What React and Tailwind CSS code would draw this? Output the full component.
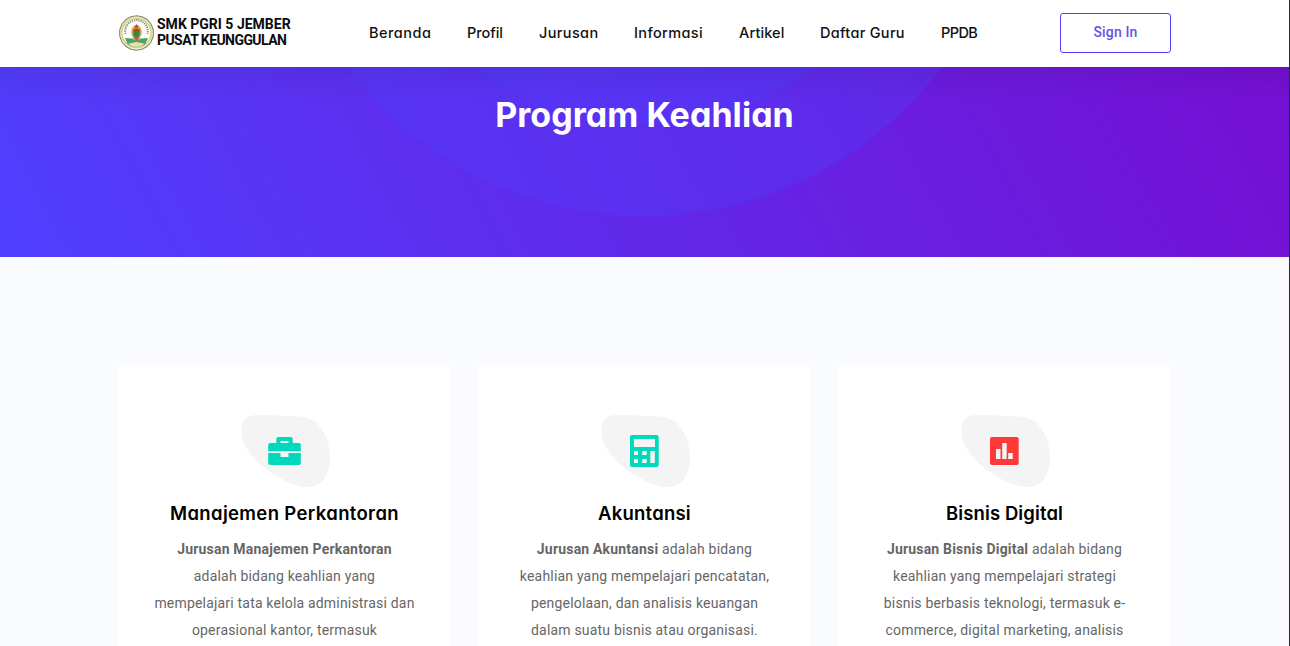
const NAV = [
  { label: 'Beranda', box: 'w-[98px] tracking-[0.5px]' },
  { label: 'Profil', box: 'w-[72px] tracking-[-0.05px]' },
  { label: 'Jurusan', box: 'w-[95px] tracking-[0.38px]' },
  { label: 'Informasi', box: 'w-[105px] tracking-[0.38px]' },
  { label: 'Artikel', box: 'w-[81px] tracking-[0.12px]' },
  { label: 'Daftar Guru', box: 'w-[121px] tracking-[0.3px]' },
  { label: 'PPDB', box: 'w-[60px] tracking-[-0.6px]' },
];

function Emblem() {
  return (
    <svg viewBox="0 0 35 36" className="h-9 w-[35px] shrink-0">
      <path d="M17.500 .8 L23 1.800 L28 4.500 L32 9 L34.300 15 L34.300 21 L32 27 L28 31.500 L23 34.300 L17.500 35.200 L12 34.300 L7 31.500 L3 27 L.7 21 L.7 15 L3 9 L7 4.500 L12 1.800 Z" fill="#f0eecb" stroke="#85866b" strokeWidth="1.100" />
      <circle cx="17.500" cy="18" r="14.600" fill="#fcfcf8" stroke="#d3cf7c" strokeWidth="1.300" />
      <path d="M6.500 19a11.300 11.300 0 1 1 22 0" fill="none" stroke="#8d8d8d" strokeWidth="2" strokeDasharray="1.300 .9" />
      <path d="M6 23l7 .5 4.500 2 4.500-2 7-.5-2.500 6-4.500 2.500h-9L8.500 29z" fill="#4aa36d" />
      <path d="M9.500 28.500l8-1.500 8 1.500-3.500 3h-9z" fill="#e9dfa2" />
      <ellipse cx="17.500" cy="17" rx="5.300" ry="7" fill="#c9b04a" />
      <ellipse cx="17.500" cy="18" rx="3.400" ry="4.800" fill="#3b8444" />
      <path d="M17.500 9l2 3.500h-4zM14.500 14h6v2.500h-6z" fill="#cc3a2e" />
      <path d="M13.500 22.500h8L17.500 26z" fill="#cf5a36" />
    </svg>
  );
}

function Briefcase() {
  return (
    <svg viewBox="268 437 33 28" className="h-7 w-[33px]" fill="#00d9bb">
      <path fillRule="evenodd" d="M276.300 443v-4a2 2 0 0 1 2-2h12.400a2 2 0 0 1 2 2v4h6.100a2 2 0 0 1 2 2v6.200h-32.600v-6.200a2 2 0 0 1 2-2zM280.500 441v2h8v-2z" />
      <path d="M268.200 453h12.300v4h8v-4h12.300v10a2 2 0 0 1-2 2h-28.600a2 2 0 0 1-2-2z" />
    </svg>
  );
}

function Calculator() {
  return (
    <svg viewBox="630 435 29 32" className="h-8 w-[29px]" fill="#00d9bb">
      <path fillRule="evenodd" d="M632 435h24.700a2 2 0 0 1 2 2v28a2 2 0 0 1-2 2H632a2 2 0 0 1-2-2v-28a2 2 0 0 1 2-2zM634 439v8h21v-8zM634 451v4h4v-4zM642.200 451v4h4.500v-4zM634 459v4h4v-4zM642.200 459v4h4.500v-4zM650.300 451v12h4.500v-12z" />
    </svg>
  );
}

function BarChart() {
  return (
    <svg viewBox="990 437 29 28" className="h-7 w-[29px]" fill="#ff3838">
      <path fillRule="evenodd" d="M992 437h24.700a2 2 0 0 1 2 2v24a2 2 0 0 1-2 2H992a2 2 0 0 1-2-2v-24a2 2 0 0 1 2-2zM996 449v10h4.500v-10zM1002.200 443v16h4.500v-16zM1008.200 453v6h4.500v-6z" />
    </svg>
  );
}

const CARDS = [
  {
    title: 'Manajemen Perkantoran',
    tracking: 'tracking-[0.35px]',
    Icon: Briefcase,
    lead: 'Jurusan Manajemen Perkantoran',
    rest: '',
    lines: ['adalah bidang keahlian yang', 'mempelajari tata kelola administrasi dan', 'operasional kantor, termasuk'],
  },
  {
    title: 'Akuntansi',
    tracking: 'tracking-[0.22px]',
    Icon: Calculator,
    lead: 'Jurusan Akuntansi',
    rest: ' adalah bidang',
    lines: ['keahlian yang mempelajari pencatatan,', 'pengelolaan, dan analisis keuangan', 'dalam suatu bisnis atau organisasi.'],
  },
  {
    title: 'Bisnis Digital',
    tracking: 'tracking-[0.1px]',
    Icon: BarChart,
    lead: 'Jurusan Bisnis Digital',
    rest: ' adalah bidang',
    lines: ['keahlian yang mempelajari strategi', 'bisnis berbasis teknologi, termasuk e-', 'commerce, digital marketing, analisis'],
  },
];

const GEO = "font-[Inter,sans-serif] [font-feature-settings:'cv11']";

function Card({ title, tracking, Icon, lead, rest, lines }) {
  return (
    <article className="flex h-[281px] w-[333px] flex-col items-center overflow-hidden rounded-t bg-white pt-[50px]">
      <div className="grid h-[72px] w-[90px] place-items-center">
        <svg viewBox="0 0 90 72" className="col-start-1 row-start-1 h-[72px] w-[90px]">
          <path d="M1.300 15C1.800 6 6 0 17 0C32 0 45 .8 60 1.500C80 2.500 90 23 90 43C90 60 81 72 68 72C55 72 40 64 30 57C14 46 .5 30 1.300 15Z" fill="#f4f4f4" />
        </svg>
        <span className="col-start-1 row-start-1"><Icon /></span>
      </div>
      <h4 className={`${GEO} ${tracking} mt-[13px] text-[18.5px] leading-[27px] font-semibold whitespace-nowrap text-black`}>{title}</h4>
      <div className="mt-[9px] text-center text-[14px] leading-[27px] tracking-[0.19px] whitespace-nowrap text-[#666666]">
        <p><b className="font-bold">{lead}</b>{rest}</p>
        {lines.map((l) => <p key={l}>{l}</p>)}
      </div>
    </article>
  );
}

export default function App() {
  return (
    <div className="flex h-[646px] w-[1290px] overflow-hidden bg-[#2b2b2b] font-[Roboto,sans-serif]">
      <div className="flex w-[1289px] flex-col bg-[#fafbff]">
        <header className="flex h-[67px] shrink-0 bg-white pl-[119px]">
          <div className="flex w-[250px] gap-[3px] pt-[15px]">
            <Emblem />
            <div className="pt-px text-[14px] leading-4 font-bold whitespace-nowrap text-[#0b0b0b]">
              <p>SMK PGRI 5 JEMBER</p>
              <p className="tracking-[-0.57px]">PUSAT KEUNGGULAN</p>
            </div>
          </div>
          <nav className={`${GEO} flex w-[691px] pt-[21px] text-[14.5px] leading-6 font-medium whitespace-nowrap text-[#111111]`}>
            {NAV.map((n) => <a key={n.label} className={n.box}>{n.label}</a>)}
          </nav>
          <button className="mt-[13px] flex h-10 w-[111px] items-center justify-center rounded-[3px] border border-[#503fff] pb-0.5 text-[14px] font-medium tracking-[0.15px] text-[#6351ea]">Sign In</button>
        </header>
        <section className="relative flex h-[190px] shrink-0 justify-center overflow-hidden bg-[linear-gradient(62deg,#503fff,#750fd2)]">
          <svg viewBox="0 0 1289 190" className="absolute inset-0 h-[190px] w-[1289px]">
            <circle cx="644.500" cy="-222" r="371" fill="#503fff" fillOpacity="0.33" />
            <circle cx="644.500" cy="-222" r="280" fill="#503fff" fillOpacity="0.33" />
          </svg>
          <div className="absolute inset-x-0 top-0 h-9 bg-linear-to-b from-black/7 via-black/3 to-transparent" />
          <h1 className={`${GEO} relative pt-[25px] text-[34px] leading-[46px] font-bold tracking-[0.05px] whitespace-nowrap text-white`}>Program Keahlian</h1>
        </section>
        <main className="flex gap-[27px] pt-[108px] pl-[118px]">
          {CARDS.map((c) => <Card key={c.title} {...c} />)}
        </main>
      </div>
    </div>
  );
}
